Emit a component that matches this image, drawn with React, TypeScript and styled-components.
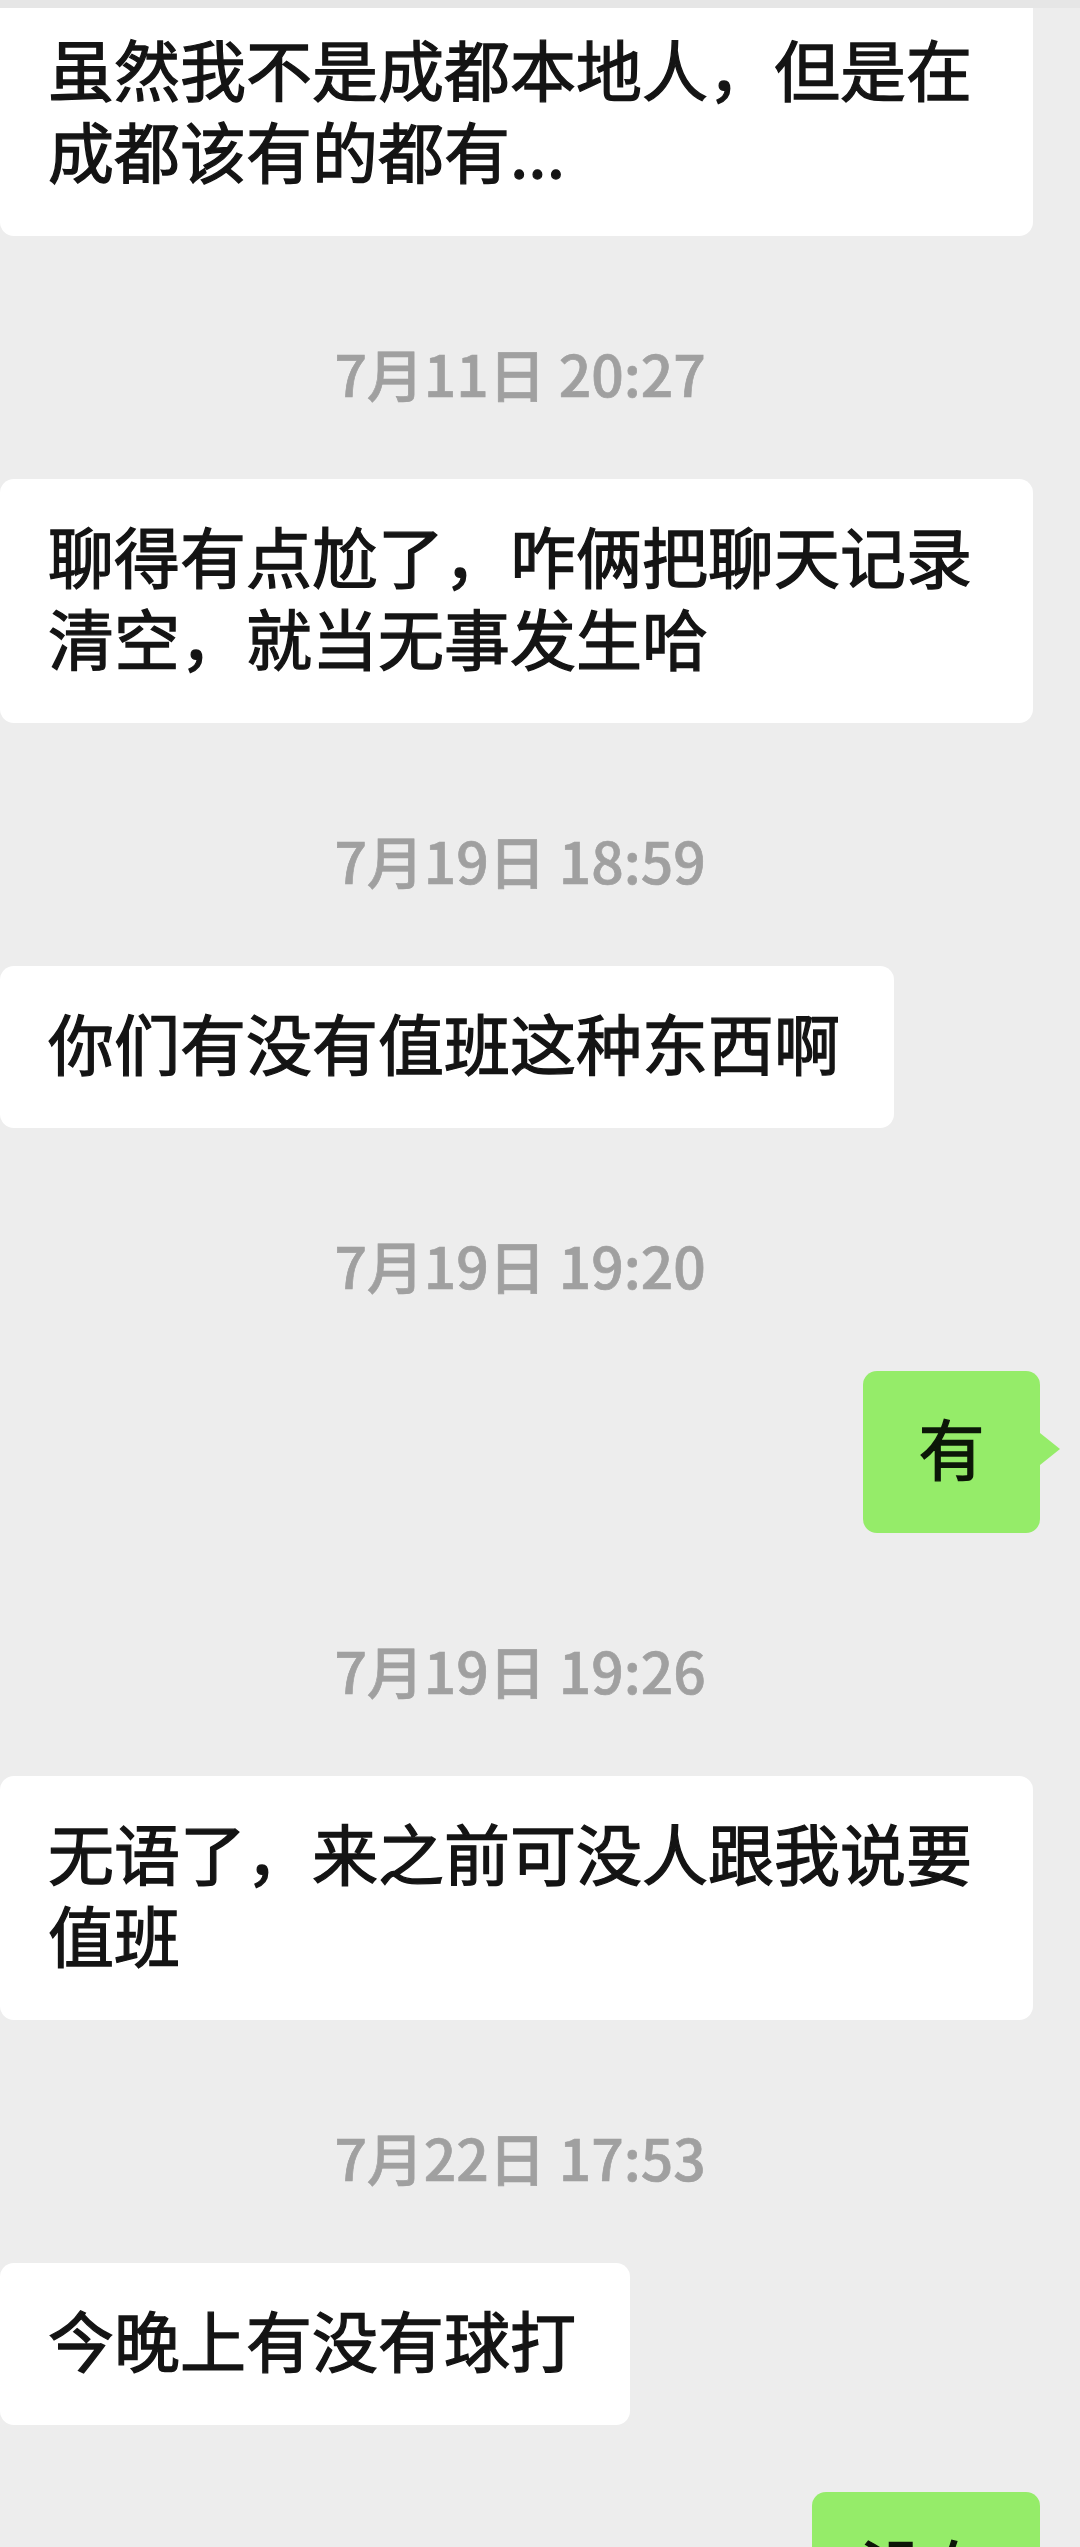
import React from "react";
import styled, { createGlobalStyle, css } from "styled-components";

const GlobalStyle = createGlobalStyle`
  html, body {
    margin: 0;
    padding: 0;
    background: #ededed;
  }
  body {
    width: 1080px;
    height: 2547px;
    overflow: hidden;
  }
`;

const Page = styled.div`
  width: 1080px;
  height: 2547px;
  overflow: hidden;
  background: #ededed;
  display: flex;
  flex-direction: column;
  font-family: "Noto Sans CJK SC", "Noto Sans", sans-serif;
`;

const TopEdge = styled.div`
  height: 8px;
  flex-shrink: 0;
  background: #e6e6e6;
`;

const MessageRow = styled.div<{ $side: "left" | "right"; $spaced?: boolean }>`
  display: flex;
  flex-shrink: 0;
  justify-content: ${(p) => (p.$side === "right" ? "flex-end" : "flex-start")};
  padding-right: ${(p) => (p.$side === "right" ? "40px" : "0")};
  margin-top: ${(p) => (p.$spaced ? "67px" : "0")};
`;

const Bubble = styled.div<{ $side: "left" | "right"; $clipped?: boolean }>`
  position: relative;
  box-sizing: border-box;
  max-width: 1033px;
  padding: 34px 54px 46px 48px;
  border-radius: 14px;
  font-size: 66px;
  line-height: 82px;
  color: #141414;
  -webkit-text-stroke: 1.3px #141414;
  background: #ffffff;
  word-break: break-all;

  ${(p) =>
    p.$clipped &&
    css`
      padding-top: 18px;
      border-top-left-radius: 0;
      border-top-right-radius: 0;
    `}

  ${(p) =>
    p.$side === "right" &&
    css`
      min-width: 177px;
      padding: 34px 48px 46px;
      text-align: center;
      background: #95ec69;
      color: #0c1608;
      -webkit-text-stroke: 1.3px #0c1608;

      &::after {
        content: "";
        position: absolute;
        right: -20px;
        top: 62px;
        width: 0;
        height: 0;
        border-left: 20px solid #95ec69;
        border-top: 16px solid transparent;
        border-bottom: 16px solid transparent;
      }
    `}
`;

const TimeStamp = styled.div`
  flex-shrink: 0;
  margin: 106px 0 77px;
  padding-right: 40px;
  height: 60px;
  line-height: 60px;
  font-size: 57px;
  font-weight: 500;
  color: #a0a0a0;
  -webkit-text-stroke: 0.7px #a0a0a0;
  text-align: center;
`;

type Item =
  | { kind: "msg"; side: "left" | "right"; text: string; clipped?: boolean }
  | { kind: "time"; text: string };

const items: Item[] = [
  { kind: "msg", side: "left", text: "虽然我不是成都本地人，但是在成都该有的都有...", clipped: true },
  { kind: "time", text: "7月11日 20:27" },
  { kind: "msg", side: "left", text: "聊得有点尬了，咋俩把聊天记录清空，就当无事发生哈" },
  { kind: "time", text: "7月19日 18:59" },
  { kind: "msg", side: "left", text: "你们有没有值班这种东西啊" },
  { kind: "time", text: "7月19日 19:20" },
  { kind: "msg", side: "right", text: "有" },
  { kind: "time", text: "7月19日 19:26" },
  { kind: "msg", side: "left", text: "无语了，来之前可没人跟我说要值班" },
  { kind: "time", text: "7月22日 17:53" },
  { kind: "msg", side: "left", text: "今晚上有没有球打" },
  { kind: "msg", side: "right", text: "没有" },
];

export default function App() {
  return (
    <>
      <GlobalStyle />
      <Page>
        <TopEdge />
        {items.map((it, i) => {
          if (it.kind === "time") return <TimeStamp key={i}>{it.text}</TimeStamp>;
          const prev = items[i - 1];
          const spaced = !!prev && prev.kind === "msg";
          return (
            <MessageRow key={i} $side={it.side} $spaced={spaced}>
              <Bubble $side={it.side} $clipped={it.clipped}>
                {it.text}
              </Bubble>
            </MessageRow>
          );
        })}
      </Page>
    </>
  );
}
